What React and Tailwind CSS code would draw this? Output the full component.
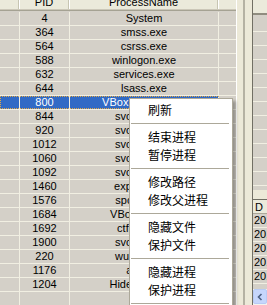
const rows = [
  ["4", "System"],
  ["364", "smss.exe"],
  ["564", "csrss.exe"],
  ["588", "winlogon.exe"],
  ["632", "services.exe"],
  ["644", "lsass.exe"],
  ["800", "VBoxService.exe"],
  ["844", "svchost.exe"],
  ["920", "svchost.exe"],
  ["1012", "svchost.exe"],
  ["1060", "svchost.exe"],
  ["1092", "svchost.exe"],
  ["1460", "explorer.exe"],
  ["1576", "spoolsv.exe"],
  ["1684", "VBoxTray.exe"],
  ["1692", "ctfmon.exe"],
  ["1900", "svchost.exe"],
  ["220", "wuauclt.exe"],
  ["1176", "alg.exe"],
  ["1204", "HideToolz.exe"],
  ["", ""],
];

const menu = [
  ["刷新"],
  null,
  ["结束进程"],
  ["暂停进程"],
  null,
  ["修改路径"],
  ["修改父进程"],
  null,
  ["隐藏文件"],
  ["保护文件"],
  null,
  ["隐藏进程"],
  ["保护进程"],
  null,
  ["退出"],
];

function HeaderSep() {
  return (
    <div className="w-[2px] h-full flex shrink-0">
      <div className="w-px h-full bg-[#c7c5b2]" />
      <div className="w-px h-full bg-white" />
    </div>
  );
}

export default function App() {
  return (
    <div className="relative w-[267px] h-[305px] overflow-hidden bg-[#ece9d8] flex font-['Liberation_Sans',Arial,sans-serif] text-[11px] text-black">
      {/* Left list */}
      <div className="w-[236px] shrink-0 flex flex-col bg-[#d4d0c8] overflow-hidden">
        <div className="h-[12px] shrink-0 flex flex-col">
          <div className="h-[9px] flex items-end bg-[#ebeadb] overflow-hidden">
            <div className="w-[18px] h-full shrink-0" />
            <HeaderSep />
            <div className="w-[48px] shrink-0 text-center leading-[13px]">PID</div>
            <HeaderSep />
            <div className="w-[147px] shrink-0 text-center leading-[13px]">ProcessName</div>
            <HeaderSep />
            <div className="flex-1" />
          </div>
          <div className="h-px bg-[#cbc7b8]" />
          <div className="h-px bg-[#a5a293]" />
          <div className="h-px bg-[#d4d0c8]" />
        </div>
        {rows.map(([pid, name], i) => {
          const sel = i === 6;
          return (
            <div key={i} className="h-[14px] shrink-0 flex border-b border-[#f1efe2]">
              <div
                className={
                  "w-[219px] shrink-0 flex " +
                  (sel
                    ? "bg-[#316ac5] text-white outline outline-1 outline-dotted outline-[#e0a848] -outline-offset-1"
                    : "")
                }
              >
                <div className="w-[20px] shrink-0 border-r border-[#f1efe2]" />
                <div className="w-[50px] shrink-0 border-r border-[#f1efe2] text-center leading-[13px]">{pid}</div>
                <div className="w-[149px] shrink-0 border-r border-[#f1efe2] text-center leading-[13px] whitespace-nowrap overflow-hidden">{name}</div>
              </div>
              <div className="flex-1" />
            </div>
          );
        })}
      </div>

      {/* Splitter */}
      <div className="w-[17px] shrink-0 flex">
        <div className="w-px bg-white" />
        <div className="w-[6px] bg-[#ece9d8]" />
        <div className="w-[2px] bg-[#b5b2a3]" />
        <div className="w-[7px] bg-[#ece9d8]" />
        <div className="w-px bg-[#716f64]" />
      </div>

      {/* Right panels */}
      <div className="w-[14px] shrink-0 flex flex-col">
        <div className="h-[190px] shrink-0 flex flex-col bg-[#d4d0c8] overflow-hidden">
          <div className="h-[13px] shrink-0 bg-[#ebeadb]" />
          <div className="h-[2px] shrink-0 bg-[#8f8c7f]" />
          <div className="h-[3px] shrink-0" />
          {Array.from({ length: 13 }).map((_, i) => (
            <div key={i} className="h-[14px] shrink-0 border-b border-[#f1efe2]" />
          ))}
        </div>
        <div className="h-[9px] shrink-0 bg-[#ece9d8]" />
        <div className="flex-1 flex flex-col bg-[#d4d0c8] overflow-hidden border-t border-[#716f64]">
          <div className="h-[14px] shrink-0 bg-[#ebeadb] border-b border-[#aca899] leading-[14px] pl-[2px]">D</div>
          {Array.from({ length: 5 }).map((_, i) => (
            <div key={i} className="h-[14px] shrink-0 border-b border-[#f1efe2] leading-[13px] pl-[1px] whitespace-nowrap">2010</div>
          ))}
          <div className="flex-1" />
          <div className="h-[16px] shrink-0 bg-[#f4f3ee] flex">
            <div className="w-[14px] h-[15px] rounded-[2px] border border-[#b8cbf5] bg-[#c6d6fc] flex items-center justify-center">
              <svg width="6" height="8" viewBox="0 0 6 8">
                <path d="M4.5 1 L1.5 4 L4.5 7" stroke="#4d6185" strokeWidth="1.6" fill="none" />
              </svg>
            </div>
          </div>
        </div>
      </div>

      {/* Context menu */}
      <div className="absolute left-[129px] top-[98px] w-[104px] bg-white border border-[#aca899] pt-[2px] shadow-[3px_3px_3px_rgba(0,0,0,0.3)] font-['Noto_Sans_CJK_SC',sans-serif] text-[12px] text-black">
        {menu.map((m, i) =>
          m ? (
            <div key={i} className="h-[18px] flex items-center pl-[18px] leading-none whitespace-nowrap">
              {m[0]}
            </div>
          ) : (
            <div key={i} className="h-[9px] flex items-center pl-[1px] pr-[3px]">
              <div className="h-px w-full bg-[#aca899]" />
            </div>
          )
        )}
      </div>
    </div>
  );
}
